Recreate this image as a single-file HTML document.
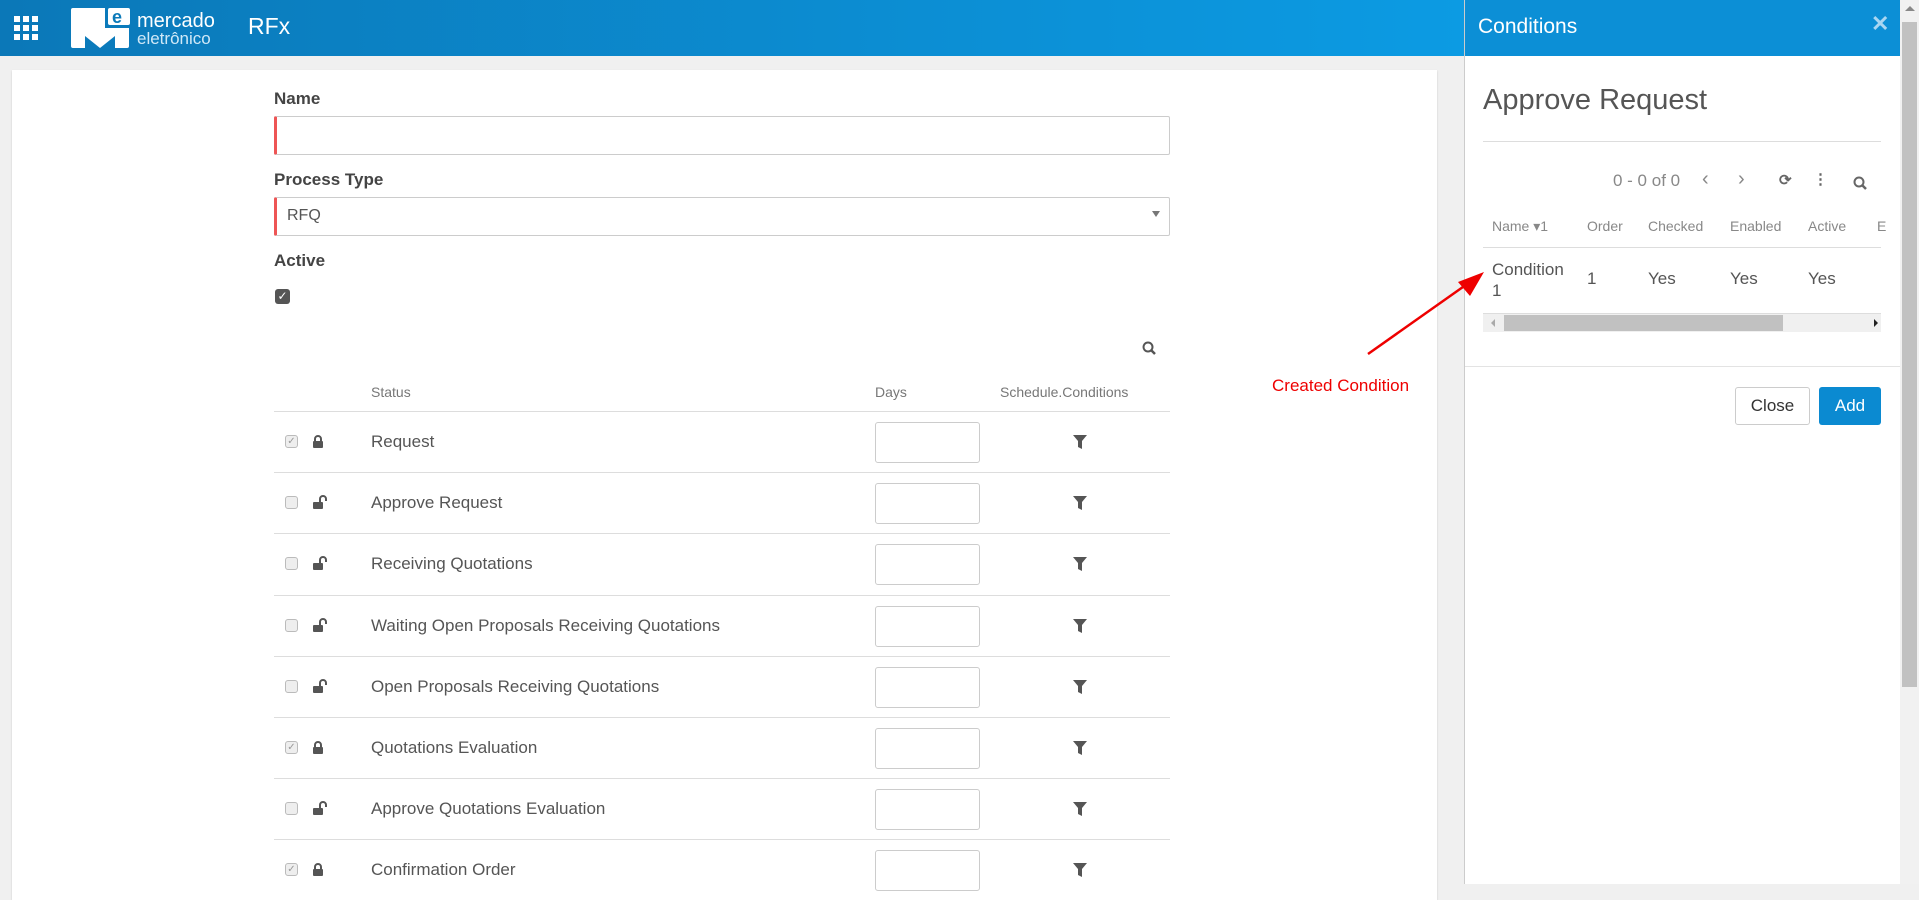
<!DOCTYPE html>
<html><head><meta charset="utf-8"><style>
*{box-sizing:border-box;margin:0;padding:0}
body{width:1919px;height:884px;overflow:hidden;background:#f0f0f0;font-family:"Liberation Sans",sans-serif;position:relative;color:#555}
.a{position:absolute}
.hdr{left:0;top:0;width:1464px;height:56px;background:linear-gradient(90deg,#0b78b8,#0c9be3)}
.card{left:12px;top:70px;width:1425px;height:830px;background:#fff;box-shadow:0 1px 2px rgba(0,0,0,.15)}
.lbl{font-size:17px;font-weight:bold;color:#444}
.inp{border:1px solid #ccc;border-left:3px solid #e55;border-radius:2px;background:#fff}
.row{left:274px;width:896px;height:61px;border-top:1px solid #ddd}
.st{font-size:17px;color:#555}
.days{width:105px;height:41px;border:1px solid #ccc;border-radius:3px;background:#fff}
.cb{width:13px;height:13px;border:1px solid #bbb;border-radius:3px;background:#eee}
.panel{left:1464px;top:0;width:436px;height:884px;background:#fff;border-left:1px solid #ccc}
</style></head><body>
<div class="a hdr"></div>
<svg class="a" style="left:14px;top:16px" width="26" height="26"><g fill="#fff">
<rect x="0" y="0" width="6" height="6"/><rect x="9" y="0" width="6" height="6"/><rect x="18" y="0" width="6" height="6"/>
<rect x="0" y="9" width="6" height="6"/><rect x="9" y="9" width="6" height="6"/><rect x="18" y="9" width="6" height="6"/>
<rect x="0" y="18" width="6" height="6"/><rect x="9" y="18" width="6" height="6"/><rect x="18" y="18" width="6" height="6"/></g></svg>
<svg class="a" style="left:71px;top:8px" width="60" height="41"><path d="M2 0H34V20H58V38Q58 40 56 40H44V28L29 40L14 28V40H2Q0 40 0 38V2Q0 0 2 0Z" fill="#fff"/><rect x="37" y="0" width="22" height="17" rx="2" fill="#fff"/><text x="41" y="15" font-size="18" font-weight="bold" fill="#0b7ab9" font-family="Liberation Sans">e</text></svg>
<div class="a" style="left:137px;top:12px;color:#fff;font-size:20px;line-height:18px">mercado</div>
<div class="a" style="left:137px;top:31px;color:#cfe8f7;font-size:17px;line-height:16px;font-weight:300">eletrônico</div>
<div class="a" style="left:248px;top:13px;color:#fff;font-size:23px">RFx</div>

<div class="a card"></div>
<div class="a lbl" style="left:274px;top:89px">Name</div>
<div class="a inp" style="left:274px;top:116px;width:896px;height:39px"></div>
<div class="a lbl" style="left:274px;top:170px">Process Type</div>
<div class="a inp" style="left:274px;top:197px;width:896px;height:39px;font-size:16px;padding:9px 10px;color:#555">RFQ</div>
<div class="a" style="left:1152px;top:211px;border:4px solid transparent;border-top:6px solid #777"></div>
<div class="a lbl" style="left:274px;top:251px">Active</div>
<div class="a" style="left:275px;top:289px;width:15px;height:15px;background:#555;border-radius:3px;color:#fff;font-size:12px;text-align:center;line-height:15px">✓</div>
<svg class="a" style="left:1142px;top:341px" width="14" height="14"><circle cx="6" cy="6" r="4.5" stroke="#555" stroke-width="2" fill="none"/><path d="M9 9l4 4" stroke="#555" stroke-width="2.5"/></svg>
<div class="a" style="left:371px;top:384px;font-size:14px;color:#777">Status</div>
<div class="a" style="left:875px;top:384px;font-size:14px;color:#777">Days</div>
<div class="a" style="left:1000px;top:384px;font-size:14px;color:#777">Schedule.Conditions</div>

<div id="rows"></div>
<script>
var r=[["Request",1],["Approve Request",0],["Receiving Quotations",0],["Waiting Open Proposals Receiving Quotations",0],["Open Proposals Receiving Quotations",0],["Quotations Evaluation",1],["Approve Quotations Evaluation",0],["Confirmation Order",1]];
var h="";
r.forEach(function(x,i){var t=411+61.2*i,c=t+31;
h+='<div class="a row" style="top:'+t+'px"></div>';
h+='<div class="a cb" style="left:285px;top:'+(c-7)+'px;font-size:10px;line-height:11px;text-align:center;color:#999">'+(x[1]?'✓':'')+'</div>';
h+='<svg class="a" style="left:312px;top:'+(c-8)+'px" width="16" height="14">'+(x[1]?'<path d="M3 7V5a3 3 0 0 1 6 0v2" stroke="#555" stroke-width="2" fill="none"/>':'<path d="M8 7V4a3 3 0 0 1 6 0v2" stroke="#555" stroke-width="2" fill="none"/>')+'<rect x="1" y="7" width="10" height="7" rx="1" fill="#555"/></svg>';
h+='<div class="a st" style="left:371px;top:'+(c-10)+'px">'+x[0]+'</div>';
h+='<div class="a days" style="left:875px;top:'+(t+11)+'px"></div>';
h+='<svg class="a" style="left:1073px;top:'+(c-7)+'px" width="14" height="14"><path d="M0 0h14L9 6v8L5 12V6z" fill="#555"/></svg>';});
document.getElementById("rows").innerHTML=h;
</script>

<div class="a" style="left:1272px;top:376px;color:#e00;font-size:17px">Created Condition</div>

<div class="a panel">
<div class="a" style="left:0;top:0;width:435px;height:56px;background:#0c8fd6"></div>
<div class="a" style="left:13px;top:15px;color:#fff;font-size:21px">Conditions</div>
<div class="a" style="left:406px;top:11px;color:#a9d6f2;font-size:22px;font-weight:bold">✕</div>
<div class="a" style="left:18px;top:84px;font-size:29px;color:#555">Approve Request</div>
<div class="a" style="left:18px;top:141px;width:398px;height:1px;background:#ddd"></div>
<div class="a" style="left:148px;top:171px;font-size:17px;color:#888">0 - 0 of 0</div>
<div class="a" style="left:237px;top:168px;font-size:20px;color:#888">‹</div>
<div class="a" style="left:273px;top:168px;font-size:20px;color:#888">›</div>
<div class="a" style="left:314px;top:171px;font-size:15px;color:#666;font-weight:bold">⟳</div>
<div class="a" style="left:348px;top:170px;font-size:15px;color:#666;font-weight:bold">⋮</div>
<svg class="a" style="left:388px;top:176px" width="14" height="14"><circle cx="6" cy="6" r="4.5" stroke="#666" stroke-width="2" fill="none"/><path d="M9 9l4 4" stroke="#666" stroke-width="2.5"/></svg>
<div class="a" style="left:27px;top:218px;font-size:14px;color:#888">Name ▾1</div>
<div class="a" style="left:122px;top:218px;font-size:14px;color:#888">Order</div>
<div class="a" style="left:183px;top:218px;font-size:14px;color:#888">Checked</div>
<div class="a" style="left:265px;top:218px;font-size:14px;color:#888">Enabled</div>
<div class="a" style="left:343px;top:218px;font-size:14px;color:#888">Active</div>
<div class="a" style="left:412px;top:218px;font-size:14px;color:#888">E</div>
<div class="a" style="left:18px;top:247px;width:398px;height:1px;background:#ddd"></div>
<div class="a" style="left:27px;top:259px;font-size:17px;color:#555;line-height:21px">Condition<br>1</div>
<div class="a" style="left:122px;top:269px;font-size:17px;color:#555">1</div>
<div class="a" style="left:183px;top:269px;font-size:17px;color:#555">Yes</div>
<div class="a" style="left:265px;top:269px;font-size:17px;color:#555">Yes</div>
<div class="a" style="left:343px;top:269px;font-size:17px;color:#555">Yes</div>
<div class="a" style="left:18px;top:313px;width:398px;height:19px;background:#f0f0f0;border-top:1px solid #ddd"></div>
<div class="a" style="left:39px;top:315px;width:279px;height:16px;background:#c1c1c1"></div>
<div class="a" style="left:26px;top:319px;border:4px solid transparent;border-right:4px solid #aaa;border-left:0"></div>
<div class="a" style="left:409px;top:319px;border:4px solid transparent;border-left:4px solid #222;border-right:0"></div>
<div class="a" style="left:0;top:366px;width:435px;height:1px;background:#e3e3e3"></div>
<div class="a" style="left:270px;top:387px;width:75px;height:38px;border:1px solid #ccc;border-radius:3px;font-size:17px;color:#333;text-align:center;line-height:36px">Close</div>
<div class="a" style="left:354px;top:387px;width:62px;height:38px;background:#0b8ad1;border-radius:3px;font-size:17px;color:#fff;text-align:center;line-height:38px">Add</div>
</div>
<svg class="a" style="left:1360px;top:260px;z-index:5" width="140" height="105"><path d="M8 94L110 22" stroke="#e00" stroke-width="2.5"/><path d="M124 12L98 22L110 36z" fill="#e00"/></svg>
<div class="a" style="left:1900px;top:0;width:19px;height:884px;background:#f1f1f1"></div>
<div class="a" style="left:1902px;top:22px;width:15px;height:665px;background:#c1c1c1"></div>
<div class="a" style="left:1905px;top:6px;border:5px solid transparent;border-bottom:5px solid #888;border-top:0"></div>
</body></html>
